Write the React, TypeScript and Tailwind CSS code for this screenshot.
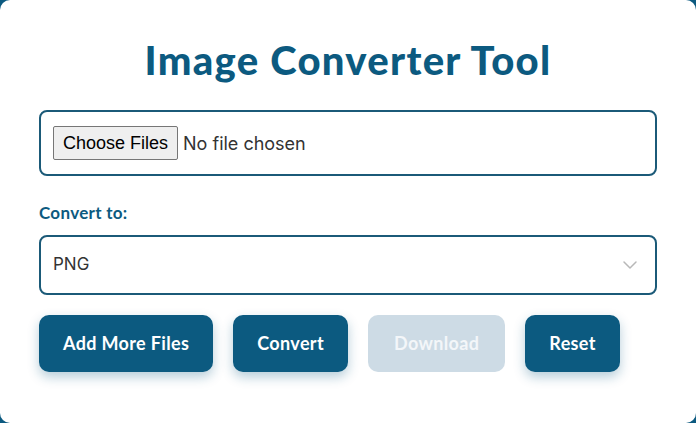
import { ChevronDown } from "lucide-react";

const heading = { fontFamily: "Lato, 'Noto Sans', sans-serif" };
const body = { fontFamily: "Inter, 'Noto Sans', sans-serif" };

const buttons = [
  { label: "Add More Files", disabled: false },
  { label: "Convert", disabled: false },
  { label: "Download", disabled: true },
  { label: "Reset", disabled: false },
];

export default function App() {
  return (
    <div className="h-[423px] w-[696px] overflow-hidden bg-[#0c5a80]">
      <div className="flex h-full w-full flex-col rounded-[10px] bg-white px-[39px] pt-[32px]">
        <h1
          className="text-center text-[40px] leading-[56px] font-black tracking-[1.3px] text-[#0c5a80]"
          style={heading}
        >
          Image Converter Tool
        </h1>

        {/* file picker */}
        <div className="mt-[22px] flex h-[66px] items-center gap-[5px] rounded-lg border-2 border-[#1b5a78] px-3">
          <button
            type="button"
            className="h-[34px] rounded-[2px] border border-[#767676] bg-[#efefef] px-[9px] text-[18px] text-black"
            style={{ fontFamily: "'Liberation Sans', Arial, sans-serif" }}
          >
            Choose Files
          </button>
          <span className="text-[18px] text-[#333]" style={body}>
            No file chosen
          </span>
        </div>

        <label
          className="mt-[25px] text-[17px] leading-[24px] font-bold tracking-[0.3px] text-[#0c5a80]"
          style={heading}
        >
          Convert to:
        </label>

        {/* format select */}
        <div className="mt-[10px] flex h-[60px] items-center justify-between rounded-lg border-2 border-[#1b5a78] pr-[13px] pl-3">
          <span className="text-[17px] text-[#333]" style={body}>
            PNG
          </span>
          <ChevronDown size={24} strokeWidth={1.5} className="text-[#b8b8b8]" />
        </div>

        <div className="mt-[20px] flex gap-5">
          {buttons.map((b) => (
            <button
              key={b.label}
              type="button"
              disabled={b.disabled}
              className={
                b.disabled
                  ? "h-[57px] rounded-[10px] bg-[#cddbe5] px-[26px] text-[18px] font-bold tracking-[0.35px] text-[#f3f6f9]"
                  : "h-[57px] rounded-[10px] bg-[#0c5a80] px-6 text-[18px] font-bold tracking-[0.35px] text-white shadow-[0_5px_12px_rgba(12,90,128,0.3)]"
              }
              style={heading}
            >
              {b.label}
            </button>
          ))}
        </div>
      </div>
    </div>
  );
}
